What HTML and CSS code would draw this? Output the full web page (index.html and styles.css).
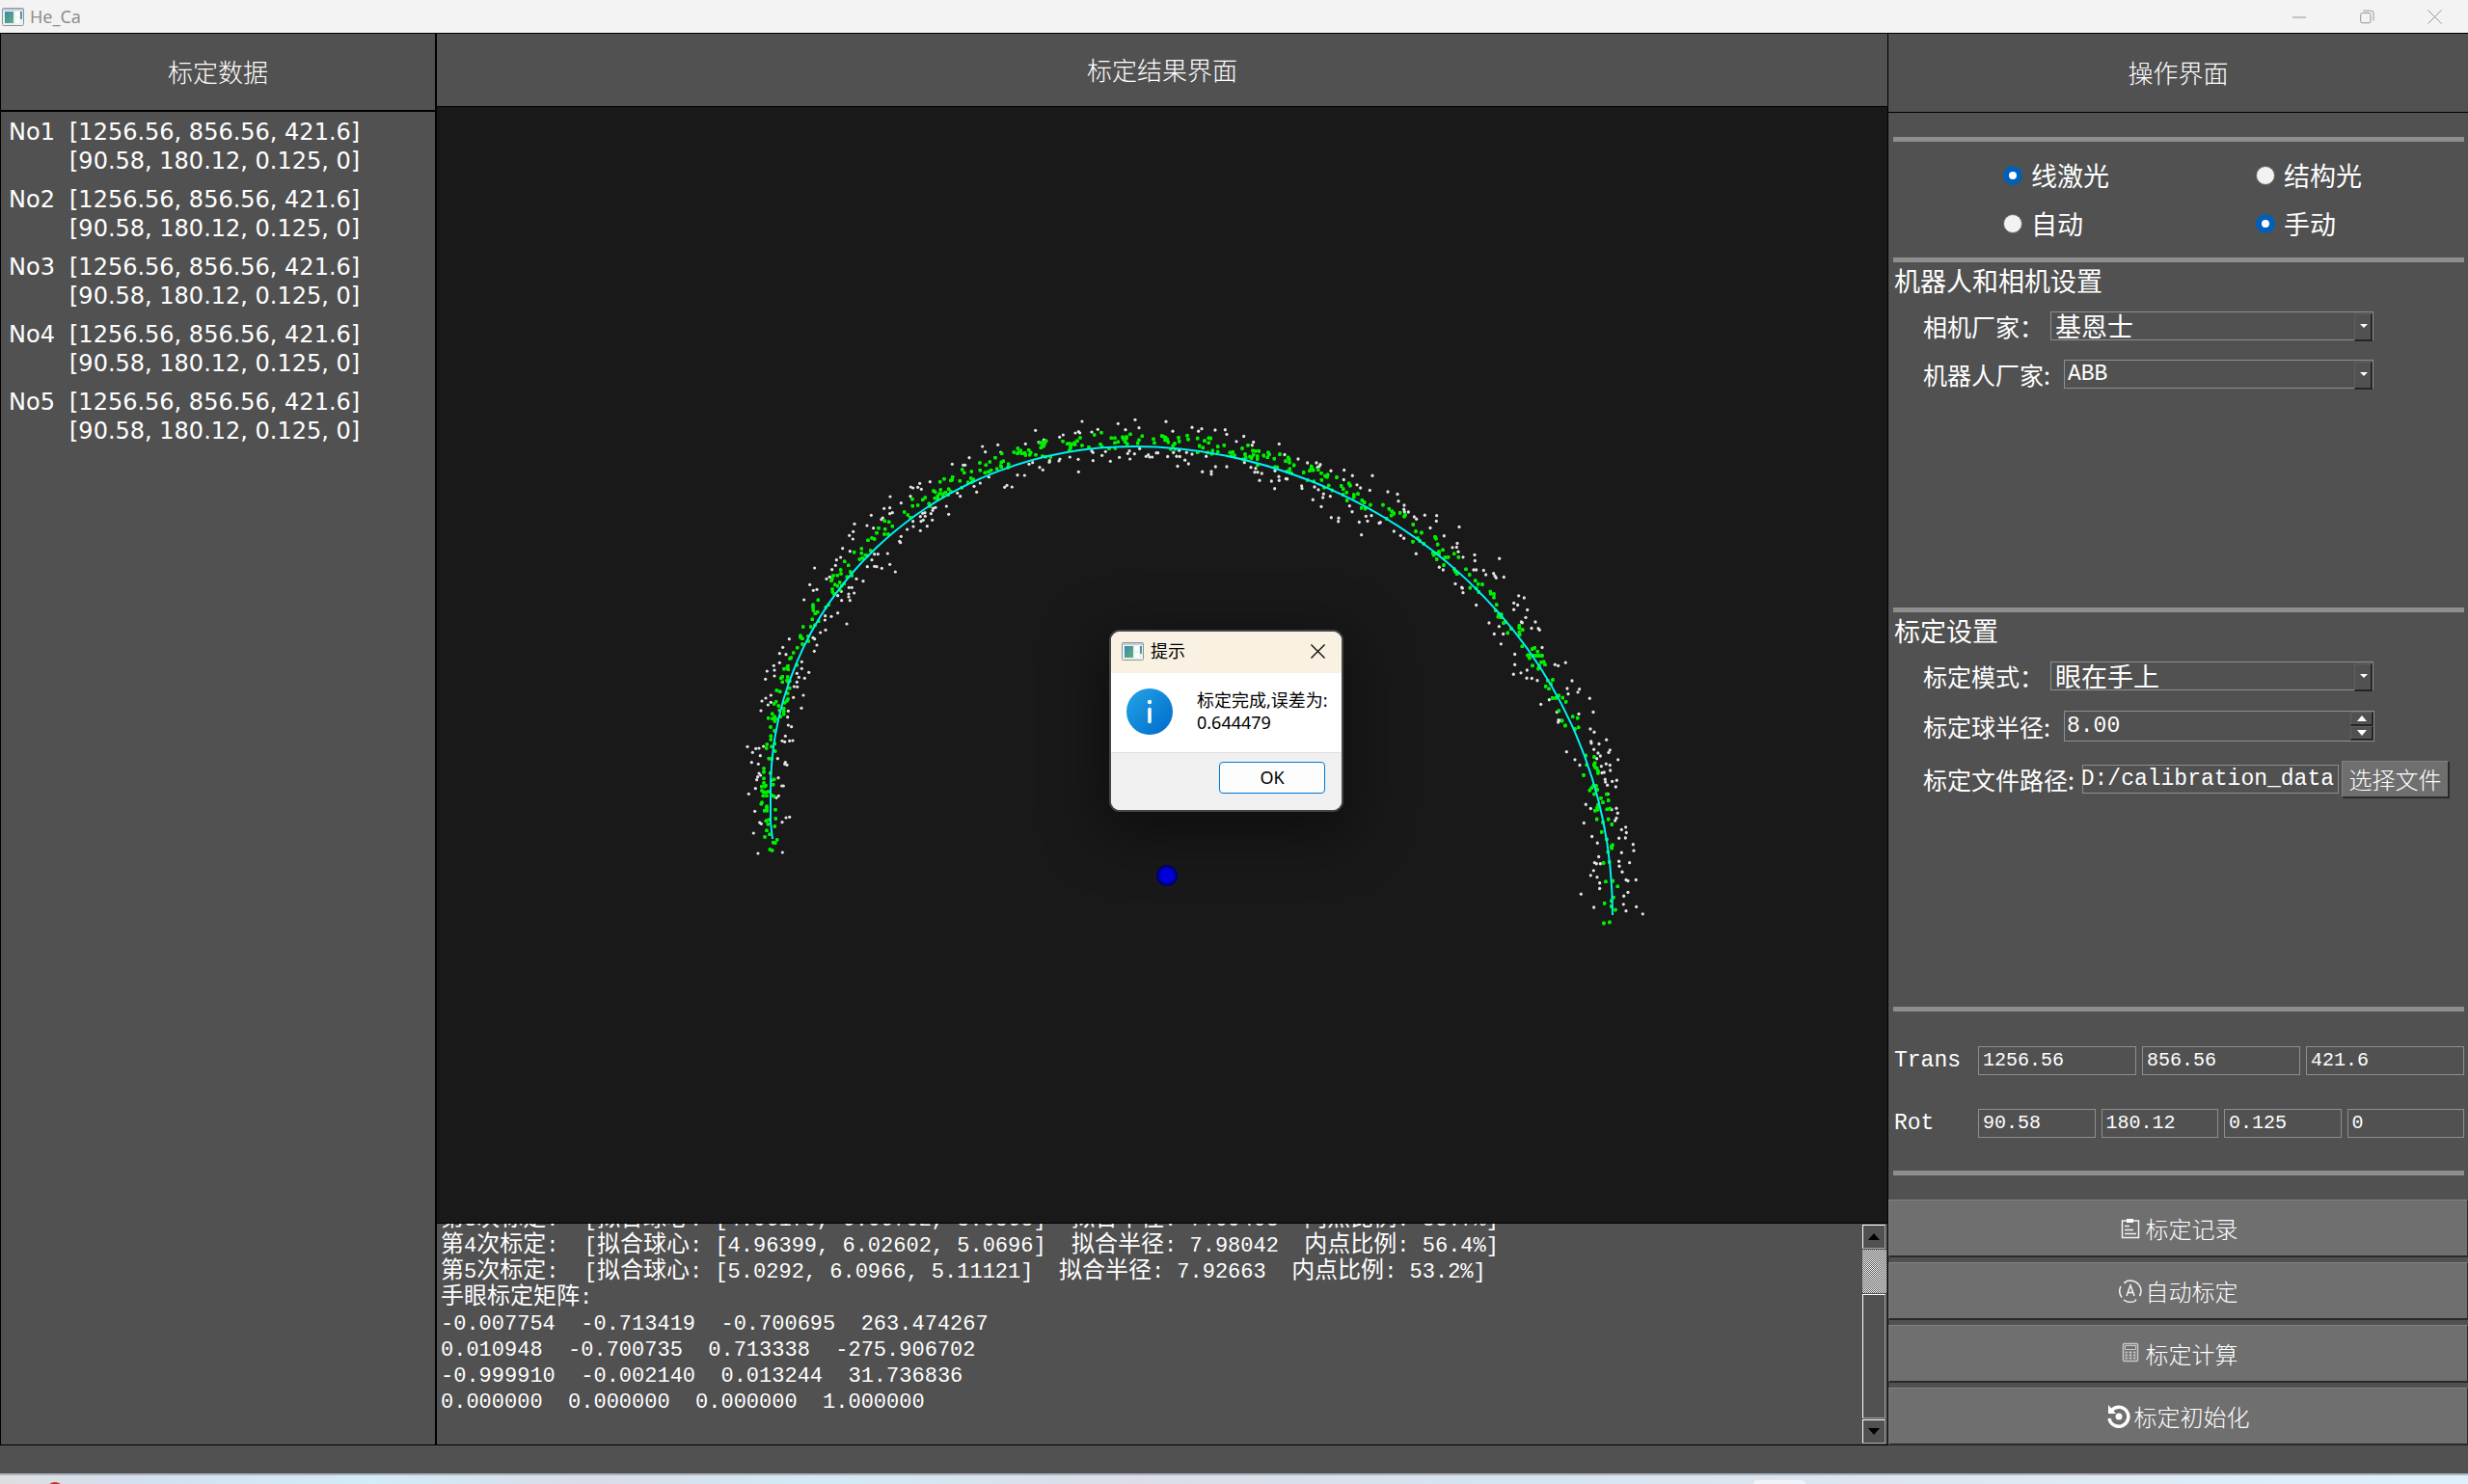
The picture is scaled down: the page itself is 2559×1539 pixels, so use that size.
FILE: index.html
```html
<!DOCTYPE html>
<html lang="zh-CN">
<head>
<meta charset="utf-8">
<title>He_Ca</title>
<link rel="stylesheet" href="styles.css">
</head>
<body>
<svg class="defs" width="0" height="0" aria-hidden="true">
  <defs>
    <linearGradient id="app-fill" x1="0" y1="0" x2="1" y2="1"><stop offset="0" stop-color="#3f86b0"/><stop offset="1" stop-color="#5db37a"/></linearGradient>
    <symbol id="app-icon" viewBox="0 0 23 19">
      <rect x=".5" y=".5" width="22" height="18" rx="1" fill="#eef1f4" stroke="#8d949b"/>
      <path d="M1 2h21" stroke="#c3ccd8" stroke-width="2"/>
      <rect x="3" y="4" width="9" height="12" fill="url(#app-fill)"/>
      <path d="M14 4h4v5h-4zM14 11h4v5h-4z" fill="#fff"/>
      <rect x="19" y="4" width="2" height="8" fill="url(#app-fill)"/>
    </symbol>
  </defs>
</svg>

<header class="titlebar">
  <svg class="app-icon" aria-hidden="true"><use href="#app-icon"/></svg>
  <span class="app-name">He_Ca</span>
  <div class="window-controls">
    <button type="button" aria-label="最小化"><svg viewBox="0 0 16 16"><path d="M0 8.5h15"/></svg></button>
    <button type="button" aria-label="还原"><svg viewBox="0 0 16 16"><rect x=".7" y="3.7" width="11" height="11" rx="2"/><path d="M3.5 1.2h8.500a3 3 0 0 1 3 3v7.800"/></svg></button>
    <button type="button" aria-label="关闭"><svg viewBox="0 0 16 16"><path d="M.5.500l15 15M15.500.500l-15 15"/></svg></button>
  </div>
</header>

<main class="workspace">
  <section class="data-panel">
    <h2 class="panel-title">标定数据</h2>
    <dl class="records">
      <div><dt>No1</dt><dd>[1256.56, 856.56, 421.6]<br>[90.58, 180.12, 0.125, 0]</dd></div>
      <div><dt>No2</dt><dd>[1256.56, 856.56, 421.6]<br>[90.58, 180.12, 0.125, 0]</dd></div>
      <div><dt>No3</dt><dd>[1256.56, 856.56, 421.6]<br>[90.58, 180.12, 0.125, 0]</dd></div>
      <div><dt>No4</dt><dd>[1256.56, 856.56, 421.6]<br>[90.58, 180.12, 0.125, 0]</dd></div>
      <div><dt>No5</dt><dd>[1256.56, 856.56, 421.6]<br>[90.58, 180.12, 0.125, 0]</dd></div>
    </dl>
  </section>

  <section class="result-panel">
    <h2 class="panel-title">标定结果界面</h2>
    <div class="viewport">
      <svg viewBox="453 111 1504 1157" role="img" aria-label="拟合点云">
        <defs>
          <marker id="inlier" viewBox="-6 -6 12 12" markerUnits="userSpaceOnUse" markerWidth="12" markerHeight="12"><circle r="6" fill="#00f000"/></marker>
          <marker id="outlier" viewBox="-6 -6 12 12" markerUnits="userSpaceOnUse" markerWidth="12" markerHeight="12"><circle r="4.800" fill="#e4e4e4"/></marker>
          <radialGradient id="ball"><stop offset="0" stop-color="#0000f4"/><stop offset=".6" stop-color="#0000d8"/><stop offset="1" stop-color="#00005a"/></radialGradient>
        </defs>
        <g transform="translate(740 420) scale(.33333)">
          <polyline class="outliers" points="1146,51 1258,58 1311,46 1323,71 1281,77 1195,76 1176,84 1135,83 1125,87 1139,87 1087,93 1076,100 1001,79 970,121 1011,116 1027,108 884,124 836,129 845,146 893,147 795,164 742,184 776,187 782,187 673,239 641,244 635,256 613,255 620,258 646,262 612,284 549,285 583,305 530,322 548,320 556,335 548,338 490,343 522,356 526,351 438,370 477,375 497,383 434,394 422,406 433,417 401,446 424,455 395,474 382,482 379,499 314,507 368,512 361,535 351,541 299,559 310,577 321,574 281,606 235,728 215,754 205,773 225,776 205,802 187,811 166,828 189,825 189,843 161,853 178,903 162,912 150,921 178,925 169,933 147,951 105,1063 131,1069 141,1068 155,1062 121,1081 145,1091 118,1112 139,1117 141,1146 146,1152 137,1157 134,1166 130,1193 109,1210 128,1264 143,1299 148,1303 124,1332 138,1395 214,1392 213,1298 225,1284 236,1282 202,1216 195,1222 212,1185 217,1185 201,1160 221,1117 228,1120 223,1112 199,1100 213,1045 221,1048 236,1045 246,1044 223,1030 232,996 242,1001 230,971 232,952 273,943 248,910 279,903 250,876 260,877 259,862 265,847 283,850 259,835 296,832 274,820 274,799 313,766 321,747 314,728 309,724 332,708 348,700 414,681 346,669 347,656 366,658 386,647 424,608 398,608 386,593 420,597 420,588 437,585 421,568 430,568 397,580 465,548 444,541 565,519 523,508 507,503 500,502 478,503 548,496 492,482 500,464 511,464 541,462 581,428 578,424 583,409 602,387 621,378 620,362 643,391 664,377 645,362 652,358 680,358 643,347 658,346 650,337 657,335 676,338 681,328 683,321 690,319 724,315 731,340 767,284 758,274 818,271 810,253 829,243 856,224 905,256 912,250 928,255 945,218 967,219 1024,202 1014,194 992,179 981,184 1044,178 1045,173 1074,174 1077,168 1108,162 1134,169 1135,208 1180,173 1180,148 1176,143 1208,157 1219,145 1234,175 1262,163 1288,151 1295,168 1293,143 1309,152 1325,136 1345,160 1352,155 1356,162 1364,162 1377,149"/>
          <polyline class="inliers" points="1206,86 1184,93 1140,102 1131,112 1122,118 1124,123 1114,122 1107,120 1111,127 1100,121 1086,113 1110,134 1106,142 1146,126 1167,131 1203,122 1208,130 1230,136 1249,135 1237,103 1248,103 1248,118 1258,115 1272,100 1275,107 1284,99 1296,91 1280,115 1286,121 1284,104 1333,97 1323,109 1319,119 1368,106 1371,118 1034,112 1024,115 1015,118 1022,125 1030,120 1018,133 1026,128 1023,159 1033,161 1048,162 1002,155 983,155 986,148 970,156 980,140 968,149 959,151 948,148 946,135 955,142 945,151 934,147 896,151 876,164 901,175 895,178 917,184 916,194 895,193 893,189 881,199 859,177 847,187 828,180 829,203 844,211 855,208 863,203 773,201 779,211 802,207 800,228 808,232 803,240 791,241 766,236 772,257 743,224 737,235 742,233 717,230 704,239 684,267 689,271 706,264 703,276 714,276 713,284 697,283 688,290 698,292 727,278 738,270 731,262 721,272 729,280 658,288 650,295 618,293 635,312 619,314 673,315 670,307 593,333 604,342 612,350 545,364 532,361 556,377 533,386 513,383 507,398 531,402 543,402 500,417 492,414 480,421 460,447 437,458 460,461 472,467 478,469 488,453 463,476 454,480 407,487 419,499 395,513 396,525 385,530 372,531 368,541 366,547 377,559 385,563 392,552 406,556 398,563 392,575 369,573 370,582 375,588 415,535 430,531 425,519 325,607 309,622 309,630 310,639 316,649 323,644 357,622 349,629 307,667 326,673 315,685 302,690 278,690 270,718 270,723 276,727 294,719 295,735 276,744 260,755 248,771 241,786 237,789 259,809 231,812 229,818 219,821 232,823 214,845 209,850 230,846 228,857 214,862 236,859 232,862 236,881 196,888 206,892 230,897 231,915 228,920 221,926 194,923 188,930 202,936 218,944 218,953 218,962 205,950 182,961 170,974 183,976 190,970 193,977 190,984 208,970 177,1002 189,1014 178,1030 178,1041 190,1054 166,1056 180,1063 164,1068 191,1077 172,1100 180,1101 156,1131 156,1142 176,1145 156,1162 156,1176 149,1187 159,1187 162,1184 150,1200 155,1204 169,1203 161,1205 154,1216 165,1216 180,1168 188,1165 185,1181 181,1214 188,1218 150,1237 148,1241 165,1249 165,1254 158,1262 166,1262 192,1259 193,1287 163,1294 171,1291 169,1304 190,1311 165,1324 174,1336 159,1344 197,1353 185,1361 191,1363 175,1383 182,1386"/>
        </g>
        <g transform="translate(1200 420) scale(.33333 .35714)">
          <polyline class="outliers" points="27,48 48,76 108,65 128,76 138,69 180,73 211,72 216,85 269,91 246,106 299,108 295,117 379,113 396,144 438,157 467,168 495,168 507,173 504,178 498,181 540,191 581,189 607,205 580,217 669,205 621,232 632,241 661,248 717,252 747,259 750,279 768,291 767,303 769,310 781,311 799,325 806,331 832,320 869,321 868,337 849,357 939,354 892,380 933,402 931,413 918,414 936,426 951,442 987,435 988,452 1064,446 984,479 992,479 1015,480 1022,493 1046,489 1050,496 1054,502 1078,500 1124,554 1141,560 1109,575 1121,581 1109,594 1151,595 1146,617 1132,630 1135,632 1176,630 1164,648 1185,649 1189,653 1197,704 1270,748 1237,754 1247,757 1290,801 1275,823 1313,825 1308,834 1278,839 1345,852 1356,892 1311,897 1347,941 1359,950 1397,972 1349,977 1350,982 1374,984 1358,1000 1408,1002 1404,1009 1371,1011 1378,1019 1367,1027 1433,1030 1396,1042 1381,1049 1408,1046 1409,1061 1383,1068 1390,1067 1393,1087 1394,1095 1400,1104 1415,1093 1429,1090 1426,1109 1402,1130 1428,1171 1413,1175 1432,1185 1428,1200 1424,1207 1457,1226 1444,1233 1459,1242 1436,1258 1456,1257 1480,1276 1482,1294 1444,1300 1436,1325 1437,1339 1469,1329 1446,1356 1458,1379 1464,1382 1489,1379 1464,1415 1451,1426 1450,1450 1458,1469 1490,1457 1510,1478 1318,1420 1358,1459 1376,1388 1376,1404 1368,1371 1348,1366 1357,1352 1360,1329 1366,1332 1378,1332 1373,1312 1369,1272 1352,1253 1327,1214 1348,1172 1333,1160 1314,1046 1299,1030 1273,1007 1248,915 1247,921 1255,916 1243,892 1193,869 1219,856 1182,800 1165,794 1149,793 1150,770 1131,778 1108,782 1112,754 1112,724 1069,694 1076,665 1048,665 1063,643 1032,633 992,581 951,545 949,532 947,530 927,519 889,479 877,471 805,432 767,387 757,379 736,367 690,343 694,341 654,337 649,323 666,321 635,377 628,340 606,310 598,293 563,338 564,328 541,327 510,295 484,275 515,269 517,258 538,265 501,246 489,238 450,242 449,235 404,215 400,214 378,208 379,219 365,243 355,221 366,191 318,219 325,199 312,195 303,195 306,184 291,181 271,167 216,179 181,179 168,193 168,201 140,194 152,149 97,171 86,160 108,143 91,138 70,150 60,149 63,178 32,150 50,138 68,132 2,139"/>
          <polyline class="inliers" points="14,90 20,92 26,95 31,100 34,108 24,102 66,95 68,106 54,112 49,118 42,128 56,128 93,89 96,100 125,97 147,104 160,96 166,97 160,110 131,119 142,124 125,138 188,121 208,117 172,133 188,136 157,138 169,142 226,138 235,137 240,147 230,149 264,126 282,117 273,143 275,153 267,158 297,133 306,134 316,134 299,145 311,149 293,154 311,157 331,147 345,138 348,144 343,152 364,156 381,143 312,174 288,150 366,180 373,181 407,153 410,158 399,163 411,167 425,175 412,186 404,193 417,198 412,196 455,196 474,191 479,178 485,189 480,183 500,188 510,198 522,206 530,203 528,209 511,218 467,218 487,222 533,234 519,240 558,210 544,248 572,235 578,244 596,228 600,234 589,254 578,261 624,258 611,261 611,268 590,277 637,277 644,283 663,290 635,299 647,301 702,290 721,302 730,309 736,315 728,321 713,330 755,313 771,319 768,324 796,347 804,367 822,371 810,387 817,395 795,397 829,403 864,383 867,388 872,405 888,421 876,426 868,431 857,430 860,436 869,448 876,432 895,443 905,442 923,432 937,442 891,465 923,476 927,484 932,491 960,477 971,493 989,510 998,520 1011,521 973,531 992,533 1000,543 1036,542 1037,548 1047,549 1047,559 1055,580 1052,597 1062,609 1070,608 1060,615 1069,617 1077,633 1083,630 1126,641 1126,648 1136,653 1126,660 1127,667 1101,650 1090,662 1135,701 1166,709 1174,705 1183,716 1157,727 1152,727 1170,728 1179,728 1188,728 1197,728 1158,735 1194,747 1202,746 1206,754 1167,757 1187,757 1185,766 1230,798 1214,800 1224,810 1208,817 1218,824 1229,851 1239,851 1249,844 1261,850 1271,862 1249,888 1259,917 1292,905 1307,909 1310,936 1299,941 1269,931 1333,1018 1336,1045 1326,1075 1359,1022 1361,1040 1358,1045 1362,1052 1367,1055 1371,1063 1371,1069 1357,1105 1365,1106 1351,1112 1345,1119 1369,1117 1359,1130 1398,1130 1380,1142 1403,1148 1386,1154 1371,1161 1368,1170 1362,1178 1370,1175 1399,1174 1408,1172 1367,1203 1403,1203 1386,1212 1414,1218 1382,1240 1398,1261 1416,1278 1412,1283 1414,1287 1402,1298 1406,1327 1388,1330 1395,1384 1417,1382 1432,1398 1419,1430 1412,1440 1391,1447 1412,1456 1425,1466 1407,1502 1389,1505"/>
        </g>
        <path class="fit" d="M801 870L799 853V820A376 357 0 0 1 1175 463C1424 463 1672 660 1672 949"/>
        <circle cx="1210" cy="908" r="11" fill="url(#ball)"/>
      </svg>
    </div>
    <div class="log">
      <div class="log-text" tabindex="0">
        <p><b>第</b>3<b>次标定</b>:&nbsp; [<b>拟合球心</b>: [4.96179, 6.06792, 5.0568]&nbsp; <b>拟合半径</b>: 7.99408&nbsp; <b>内点比例</b>: 58.7%]</p>
        <p><b>第</b>4<b>次标定</b>:&nbsp; [<b>拟合球心</b>: [4.96399, 6.02602, 5.0696]&nbsp; <b>拟合半径</b>: 7.98042&nbsp; <b>内点比例</b>: 56.4%]</p>
        <p><b>第</b>5<b>次标定</b>:&nbsp; [<b>拟合球心</b>: [5.0292, 6.0966, 5.11121]&nbsp; <b>拟合半径</b>: 7.92663&nbsp; <b>内点比例</b>: 53.2%]</p>
        <p><b>手眼标定矩阵</b>:</p>
        <p>-0.007754&nbsp; -0.713419&nbsp; -0.700695&nbsp; 263.474267</p>
        <p>0.010948&nbsp; -0.700735&nbsp; 0.713338&nbsp; -275.906702</p>
        <p>-0.999910&nbsp; -0.002140&nbsp; 0.013244&nbsp; 31.736836</p>
        <p>0.000000&nbsp; 0.000000&nbsp; 0.000000&nbsp; 1.000000</p>
      </div>
      <div class="scrollbar">
        <button type="button" class="scroll-up" aria-label="向上滚动"></button>
        <div class="scroll-track"></div>
        <div class="scroll-thumb"></div>
        <button type="button" class="scroll-down" aria-label="向下滚动"></button>
      </div>
    </div>
  </section>

  <section class="control-panel">
    <h2 class="panel-title">操作界面</h2>
    <form class="controls">
      <hr>
      <div class="modes">
        <label><input type="radio" name="light" checked>线激光</label>
        <label><input type="radio" name="light">结构光</label>
        <label><input type="radio" name="drive">自动</label>
        <label><input type="radio" name="drive" checked>手动</label>
      </div>
      <hr>
      <section class="group devices">
        <h3>机器人和相机设置</h3>
        <div class="field"><label for="camera">相机厂家：</label><span class="combo"><select id="camera"><option>基恩士</option></select></span></div>
        <div class="field wide"><label for="robot">机器人厂家:</label><span class="combo"><select id="robot" class="latin"><option>ABB</option></select></span></div>
      </section>
      <hr>
      <section class="group calibration">
        <h3>标定设置</h3>
        <div class="field"><label for="mode">标定模式：</label><span class="combo"><select id="mode"><option>眼在手上</option></select></span></div>
        <div class="field wide"><label for="radius">标定球半径:</label><span class="spin"><input id="radius" type="number" step="0.01" value="8.00"><span class="spin-buttons"><button type="button" aria-label="增加"></button><button type="button" aria-label="减少"></button></span></span></div>
        <div class="field path"><label for="path">标定文件路径:</label><input id="path" type="text" dir="rtl" value="D:/calibration_data"><button type="button" class="browse">选择文件</button></div>
      </section>
      <hr>
      <div class="pose">
        <div class="pose-row"><label for="tx">Trans</label><input id="tx" type="text" value="1256.56"><input type="text" aria-label="Trans Y" value="856.56"><input type="text" aria-label="Trans Z" value="421.6"></div>
        <div class="pose-row"><label for="rx">Rot</label><input id="rx" type="text" value="90.58"><input type="text" aria-label="Rot 2" value="180.12"><input type="text" aria-label="Rot 3" value="0.125"><input type="text" aria-label="Rot 4" value="0"></div>
      </div>
      <hr>
      <div class="actions">
        <button type="button"><svg viewBox="0 0 24 24"><path d="M3.500 4h17v17.500h-17z" fill="none" stroke="#f4f4f4" stroke-width="1.500"/><path d="M8 2h7v4H8z" fill="#fff"/><path d="M6 9.500h5M6 13.500h9M6 17.500h12" stroke="#f4f4f4" stroke-width="1.500"/></svg>标定记录</button>
        <button type="button"><svg viewBox="0 0 24 24" fill="none" stroke="#f4f4f4" stroke-width="1.500"><path d="M3 18.500A11 11 0 0 1 2 7M5.500 3.300A11 11 0 0 1 22 7.500M21.500 17A11 11 0 0 0 23 11M18 21.500A11 11 0 0 1 5 21M5.500 3.300l1.500.500M18 21.500l-1-1M22 7.500a11 11 0 0 1 1 4"/><path d="M8 17l4-11 4 11M9.500 13.500h5"/></svg>自动标定</button>
        <button type="button"><svg viewBox="0 0 24 24" fill="none" stroke="#c8c8c8"><rect x="4.500" y="1.500" width="15" height="18" rx="1" stroke-width="1.500"/><path d="M6.500 3.500h11v4h-11z"/><path d="M6.500 10.500h2.500m1.500 0h3m1.500 0h2.500M6.500 13.500h2.500m1.500 0h3m1.500 0h2.500M6.500 16.500h2.500m1.500 0h3m1.500 0h2.500" stroke-width="2"/></svg>标定计算</button>
        <button type="button"><svg viewBox="0 0 24 24"><path d="M4.500 5.500A10 10 0 1 1 2 14" fill="none" stroke="#fff" stroke-width="3.500"/><path d="M1 0v9h8z" fill="#fff"/><circle cx="12" cy="12" r="3.500" fill="#fff"/></svg>标定初始化</button>
      </div>
    </form>
  </section>

  <div class="dialog" role="dialog" aria-labelledby="dialog-title">
    <div class="dialog-title">
      <svg class="app-icon" aria-hidden="true"><use href="#app-icon"/></svg>
      <span id="dialog-title">提示</span>
      <button type="button" aria-label="关闭提示"><svg viewBox="0 0 16 16"><path d="M.5.500l15 15M15.500.500l-15 15"/></svg></button>
    </div>
    <div class="dialog-body">
      <svg viewBox="0 0 48 48" aria-hidden="true">
        <defs><linearGradient id="info" x1="0" y1="0" x2="1" y2="1"><stop offset="0" stop-color="#23a5e6"/><stop offset="1" stop-color="#0069cc"/></linearGradient></defs>
        <circle cx="24" cy="24" r="24" fill="url(#info)"/><circle cx="24" cy="14" r="2.200" fill="#fff"/><path d="M24 21.500v13" stroke="#fff" stroke-width="3.600" stroke-linecap="round"/>
      </svg>
      <p>标定完成,误差为:<br>0.644479</p>
    </div>
    <div class="dialog-footer"><button type="button">OK</button></div>
  </div>
</main>
<footer class="statusbar"></footer>
<div class="taskbar"><i class="badge"></i><i class="tab"></i></div>
</body>
</html>
```

FILE: styles.css
```css
* { box-sizing: border-box; }
html, body { height: 100%; }
body {
  margin: 0;
  display: flex;
  flex-direction: column;
  overflow: hidden;
  background: #515151;
  color: #fff;
  font-family: "Liberation Mono", "Noto Sans CJK SC", monospace;
  font-size: 25px;
}
h2, h3, p, dl, dd { margin: 0; font-weight: 400; }
button, input, select { font: inherit; color: inherit; margin: 0; padding: 0; border: 0; border-radius: 0; background: none; outline: 0; }
.defs { position: absolute; }

/* Title bar */
.titlebar {
  flex: none;
  height: 34px;
  display: flex;
  align-items: center;
  padding-left: 2px;
  background: #f3f3f3;
  color: #8e8e8e;
}
.app-icon { width: 23px; height: 19px; flex: none; }
.app-name { margin-left: 6px; font: 18px/24px "Noto Sans", sans-serif; }
.window-controls { margin-left: auto; display: flex; }
.window-controls button { width: 70px; height: 34px; display: grid; place-items: center; }
.window-controls svg, .dialog-title button svg { width: 15px; height: 15px; fill: none; stroke: #8e8e8e; overflow: visible; }

/* Workspace */
.workspace {
  position: relative;
  flex: 1;
  min-height: 0;
  display: grid;
  grid-template-columns: 452px minmax(0, 1fr) 601px;
  border-top: 1px solid #000;
}
.panel-title {
  flex: none;
  display: grid;
  place-items: center;
  padding-bottom: 2px;
  font: 300 26px/30px "Noto Sans CJK SC", sans-serif;
}
.data-panel, .result-panel, .control-panel { display: flex; flex-direction: column; min-height: 0; min-width: 0; }
.data-panel { border: solid #000; border-width: 0 1px 1px; }
.data-panel .panel-title { height: 81px; border-bottom: 2px solid #000; }
.records { padding: 6px 8px; display: grid; gap: 10px; font: 24px/30px "DejaVu Sans", sans-serif; }
.records div { display: flex; }
.records dt { width: 63px; }

.result-panel { border: solid #000; border-width: 0 1px 1px; }
.result-panel .panel-title { height: 76px; border-bottom: 1px solid #000; }
.viewport { flex: 1; min-height: 0; background: #191919; }
.viewport svg { display: block; width: 100%; height: 100%; }
.inliers, .outliers { fill: none; stroke: none; }
.inliers { marker: url(#inlier); }
.outliers { marker: url(#outlier); }
.fit { fill: none; stroke: #00f0f0; stroke-width: 2; }

.log { flex: none; height: 230px; display: flex; border-top: 1px solid #000; }
.log-text {
  flex: 1;
  min-width: 0;
  height: 229px;
  overflow: hidden;
  display: flex;
  flex-direction: column;
  justify-content: flex-end;
  padding: 0 4px 30px;
  font-size: 22px;
  white-space: nowrap;
}
.log-text p { flex: none; height: 27px; line-height: 27px; }
.log-text b { font: 24px/1px "Noto Sans CJK SC", sans-serif; }
.scrollbar { width: 26px; padding: 1px 1px 1px 0; display: flex; flex-direction: column; gap: 1px; }
.scrollbar button, .scroll-thumb { width: 24px; border: 1px solid #fff; border-right-color: #a0a0a0; border-bottom-color: #a0a0a0; }
.scrollbar button { height: 25px; display: grid; place-items: center; }
.scrollbar button::before { content: ""; border: 6px solid transparent; }
.scrollbar .scroll-up::before { border-top-width: 0; border-bottom: 7px solid #000; }
.scrollbar .scroll-down::before { border-bottom-width: 0; border-top: 7px solid #000; }
.scroll-track { height: 45px; background: repeating-conic-gradient(#fff 0 25%, #515151 0 50%) 0 0 / 2px 2px; }
.scroll-thumb { flex: 1; }

/* Control panel */
.control-panel .panel-title { height: 82px; border: solid #000; border-width: 0 0 1px; }
.controls { flex: 1; min-height: 0; display: flex; flex-direction: column; padding-top: 25px; }
.controls hr { flex: none; width: auto; height: 5px; margin: 0 4px 0 5px; border: 0; background: #8e8e8e; }
.modes {
  padding: 10px 0 10px 119px;
  display: grid;
  grid-template-columns: 262px 1fr;
  grid-auto-rows: 50px;
  font: 27px/30px "Noto Sans CJK SC", sans-serif;
}
.modes label { display: flex; align-items: center; gap: 9px; }
.modes input { appearance: none; width: 20px; height: 20px; border: 1px solid #6a6a6a; border-radius: 50%; background: #f2f2f2; }
.modes input:checked { border: 6px solid #005fb8; background: #fff; }
.group { min-height: 0; display: flex; flex-direction: column; padding-left: 6px; }
.devices { flex: 358 1 0; }
.calibration { flex: 409 1 0; gap: 2px; }
.group h3 { font: 27px/38px "Noto Sans CJK SC", sans-serif; height: 41px; }
.calibration h3 { height: 39px; }
.field { height: 50px; display: flex; align-items: center; padding-left: 30px; }
.field label { flex: none; width: 132px; font: 25px/30px "Noto Sans CJK SC", sans-serif; white-space: nowrap; }
.field.wide label { width: 146px; }
.field.path { height: 56px; }
.field.path label { width: 165px; }
.combo, .spin { position: relative; flex: 1; margin-right: 98px; display: flex; height: 30px; border: 1px solid #8e8e8e; }
.spin { height: 32px; }
.combo select { appearance: none; width: 100%; height: 28px; padding: 0 20px 0 4px; font: 27px/28px "Noto Sans CJK SC", sans-serif; }
.combo .latin { font: 23px/28px "Liberation Mono", monospace; padding-left: 3px; }
.combo::before { content: ""; position: absolute; top: 1px; right: 0; width: 16px; height: 26px; border: solid #606060; border-width: 1px; border-right: 2px solid #242424; border-bottom: 2px solid #242424; pointer-events: none; }
.combo::after { content: ""; position: absolute; top: 12px; right: 5px; border: 4px solid transparent; border-top-color: #fff; border-bottom: 0; pointer-events: none; }
.spin input { appearance: textfield; flex: 1; min-width: 0; padding-left: 2px; font-size: 23px; }
.spin input::-webkit-inner-spin-button { appearance: none; }
.spin-buttons { width: 24px; display: grid; grid-template-rows: 1fr 1fr; }
.spin-buttons button { display: grid; place-items: center; border: solid #606060; border-width: 1px; border-right: 2px solid #242424; border-bottom: 2px solid #242424; }
.spin-buttons button::before { content: ""; border: 5px solid transparent; border-top: 0; border-bottom: 6px solid #fff; }
.spin-buttons button:last-child::before { border-bottom: 0; border-top: 6px solid #fff; }
.path input { flex: 1; min-width: 0; height: 30px; border: 1px solid #8e8e8e; padding-right: 4px; font-size: 23px; }
.browse { flex: none; width: 112px; height: 39px; margin: 0 19px 0 3px; background: #6f6f6f; border: 1px solid #828282; border-right: 2px solid #2a2a2a; border-bottom: 2px solid #2a2a2a; font: 300 24px/30px "Noto Sans CJK SC", sans-serif; }

.pose { padding: 18px 4px 17px 6px; }
.pose-row { height: 65px; display: flex; align-items: center; gap: 6px; font-size: 23px; }
.pose-row label { flex: none; width: 81px; }
.pose-row input { flex: 1; min-width: 0; height: 30px; padding-left: 4px; border: 1px solid #8e8e8e; font-size: 20px; }

.actions { padding-top: 25px; display: grid; gap: 5px; }
.actions button {
  height: 60px;
  display: flex;
  align-items: center;
  justify-content: center;
  gap: 4px;
  background: #6f6f6f;
  border: 1px solid #828282;
  border-right-color: #2a2a2a;
  border-bottom: 2px solid #2a2a2a;
  font: 300 24px/30px "Noto Sans CJK SC", sans-serif;
}
.actions svg { width: 24px; height: 24px; }

/* Message box */
.dialog {
  position: absolute;
  left: 1150px;
  top: 618px;
  width: 243px;
  height: 189px;
  display: flex;
  flex-direction: column;
  overflow: hidden;
  border: 2px solid #454545;
  border-radius: 11px;
  box-shadow: 0 16px 60px 10px rgba(0, 0, 0, .4);
  background: #fff;
  color: #000;
  font: 18px/23px "Noto Sans", "Noto Sans CJK SC", sans-serif;
}
.dialog-title { height: 43px; display: flex; align-items: center; padding: 0 17px 2px 11px; background: #f9f2e2; }
.dialog-title span { margin-left: 7px; }
.dialog-title button { margin-left: auto; display: grid; }
.dialog-title button svg { stroke: #111; stroke-width: 1.500; }
.dialog-body { flex: 1; display: flex; padding: 16px 0 0 16px; }
.dialog-body svg { flex: none; width: 48px; height: 48px; margin-right: 25px; }
.dialog-body p { padding-top: 1px; white-space: nowrap; }
.dialog-footer { height: 60px; display: flex; justify-content: flex-end; padding: 9px 17px 0 0; background: #f0f0f0; border-top: 1px solid #dfdfdf; }
.dialog-footer button { width: 110px; height: 33px; border: 1px solid #0078d4; border-radius: 4px; background: #fdfdfd; }

/* Bottom of the screen */
.statusbar { flex: none; height: 29px; }
.taskbar {
  position: relative;
  flex: none;
  height: 11px;
  overflow: hidden;
  border-top: 2px solid #adb5c0;
  background: linear-gradient(90deg, #dedee0 0, #d5dfed 5%, #d3ecf6 15%, #d9dce8 24%, #d3eaf4 33%, #dcdde8 46%, #d6e4ef 60%, #dde6f0 76%, #dff0fb 100%);
}
.badge { position: absolute; left: 48px; top: 7px; width: 18px; height: 18px; border-radius: 50%; background: #c8312b; }
.tab { position: absolute; left: 1818px; top: 5px; width: 54px; height: 20px; border-radius: 4px; background: #f0f4f9; }
```
